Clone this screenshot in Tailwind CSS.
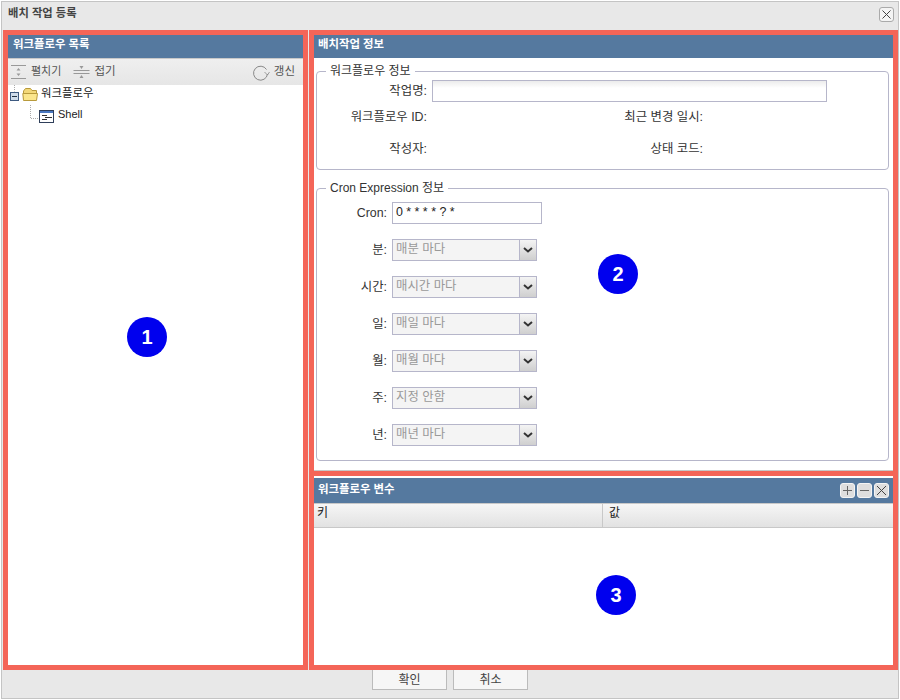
<!DOCTYPE html>
<html lang="ko">

<head>
    <meta charset="UTF-8" />
    <title>배치 작업 등록</title>
    <script src="https://cdn.jsdelivr.net/npm/@tailwindcss/browser@4"></script>
</head>

<body class="bg-white">
    <div class="relative w-[900px] h-[700px] overflow-hidden pl-px pt-px font-['Liberation_Sans','Noto_Sans_CJK_KR',sans-serif] text-[12px] leading-4 text-[#333]">
        <div class="flex flex-col w-[898px] h-[698px] border border-[#c4c4c4] bg-[#e8e8e8]">
            <!-- title bar -->
            <div class="flex items-center justify-between h-[28px] shrink-0 pl-[6px] pr-[4px]">
                <span class="font-bold text-[11.3px] text-[#444] -mt-[6px]">배치 작업 등록</span>
                <button class="flex items-center justify-center w-[15px] h-[15px] -mt-[3px] rounded-[3px] border border-[#aaa] bg-[#f4f4f4]">
                    <svg width="11" height="11" viewBox="0 0 11 11" fill="none" stroke="#444" stroke-width="1"><path d="M1.500 1.500l8 8M9.500 1.500l-8 8" /></svg>
                </button>
            </div>

            <div class="flex h-[640px] shrink-0 ml-px gap-px">
                <!-- workflow list -->
                <div class="flex flex-col w-[305px] border-[5px] border-[#f46558] bg-white">
                    <div class="h-[23px] shrink-0 pl-[5px] pt-[1px] bg-[#55799f] text-[11.4px] font-bold text-white">워크플로우 목록</div>
                    <div class="flex items-center h-[27px] shrink-0 pl-[3px] pr-[8px] border-t border-[#c8c8c8] bg-gradient-to-b from-[#efefef] to-[#e6e6e6] text-[#555]">
                        <svg width="16" height="16" viewBox="0 0 16 16" fill="none" stroke="#999"><path d="M0 1.500h15M0 14.500h15" /><path d="M7.500 4l-2 2.500h4zM7.500 12l-2-2.500h4z" fill="#999" stroke="none" /></svg>
                        <span class="ml-[4px] mr-[12px] text-[11px] -mt-[2px]">펼치기</span>
                        <svg width="18" height="16" viewBox="0 0 18 16" fill="none" stroke="#999"><path d="M0.500 6.500h16M0.500 9.500h16" /><path d="M8.500 5l-2-3h4zM8.500 11l-2 3h4z" fill="#999" stroke="none" /></svg>
                        <span class="ml-[3px] text-[11.500px] -mt-[2px]">접기</span>
                        <svg class="ml-auto" width="17" height="17" viewBox="0 0 17 17" fill="none" stroke="#888"><path d="M13.500 5.500A7 7 0 1 0 14.500 10" /><path d="M11.500 8l3 3 2-3" stroke-width="0.800" /></svg>
                        <span class="ml-[4px] text-[11.500px] -mt-[2px]">갱신</span>
                    </div>
                    <!-- tree -->
                    <div class="relative flex-1 text-[#222]">
                        <div class="flex items-center h-[18px] pl-[2px]">
                            <svg width="10" height="18" viewBox="0 0 10 18" fill="none"><path d="M4.500 0v6.500" stroke="#aaa" stroke-dasharray="1 1" /><rect x="0.500" y="7.500" width="8" height="8" fill="#cfdcea" stroke="#3d5a80" /><path d="M2 11.500h5" stroke="#234" /></svg>
                            <svg class="ml-[2px]" width="17" height="18" viewBox="0 0 17 18"><path d="M1.500 14V6l2-2.500h5l1.500 2h4.500V8" fill="#f3d878" stroke="#b89a3c" /><path d="M1.500 15.500 0.800 8.500h14.700l-1 7z" fill="#fbe68c" stroke="#b89a3c" /></svg>
                            <span class="ml-[2px] -mt-[2px] text-[11.400px]">워크플로우</span>
                        </div>
                        <div class="flex items-center h-[24px] pl-[22px]">
                            <svg width="25" height="20" viewBox="0 0 25 20" fill="none"><path d="M0.500 0v13.500H9" stroke="#aaa" stroke-dasharray="1 1" /><rect x="9.500" y="5.500" width="14" height="12" fill="#fff" stroke="#2f3f5a" /><path d="M10 6h13v2H10z" fill="#4a78c0" /><path d="M12 10.500h5M15 12.500h7M12 14.500h5" stroke="#333" /></svg>
                            <span class="ml-[3px] -mt-[3px] text-[11px]">Shell</span>
                        </div>
                    </div>
                </div>

                <!-- right column -->
                <div class="flex flex-col w-[589px] border-[5px] border-[#f46558] bg-white">
                    <div class="flex flex-col h-[436px] shrink-0 border-b border-[#c8c8c8]">
                        <div class="h-[23px] shrink-0 pl-[4px] pt-[1px] bg-[#55799f] text-[11.4px] font-bold text-white">배치작업 정보</div>
                        <div class="flex flex-col gap-[10px] pt-[5px] pl-[2px] w-[575px] text-[12.400px]">
                            <fieldset class="h-[107px] border border-[#b6b6ca] rounded-[4px] text-[#333]">
                                <legend class="ml-[9px] px-[4px] text-[12px]">워크플로우 정보</legend>
                                <div class="flex items-center h-[22px] mt-px">
                                    <span class="w-[110px] text-right">작업명:</span>
                                    <input class="w-[395px] h-[22px] ml-[5px] border border-[#b6b6ca] bg-gradient-to-b from-[#ececec] to-white to-[35%]" />
                                </div>
                                <div class="flex items-center h-[16px] mt-[7px]">
                                    <span class="w-[110px] text-right">워크플로우 ID:</span>
                                    <span class="w-[276px] text-right">최근 변경 일시:</span>
                                </div>
                                <div class="flex items-center h-[16px] mt-[16px]">
                                    <span class="w-[110px] text-right">작성자:</span>
                                    <span class="w-[276px] text-right">상태 코드:</span>
                                </div>
                            </fieldset>
                            <fieldset class="h-[281px] border border-[#b6b6ca] rounded-[4px]">
                                <legend class="ml-[9px] px-[4px] text-[12px]">Cron Expression 정보</legend>
                                <div class="flex flex-col gap-[15px] mt-[6px]">
                                    <div class="flex items-center h-[22px]">
                                        <span class="w-[70px] text-right">Cron:</span>
                                        <input value="0 * * * * ? *" class="w-[150px] h-[22px] ml-[5px] px-[3px] pb-[2px] border border-[#b6b6ca] bg-white text-[#222]" />
                                    </div>
                                    <div class="flex items-center h-[22px]">
                                        <span class="w-[70px] text-right">분:</span>
                                        <div class="flex w-[145px] h-[22px] ml-[5px] border border-[#b6b6ca] bg-[#f4f4f4] text-[#999]">
                                            <span class="flex-1 pl-[3px] mt-px">매분 마다</span>
                                            <span class="flex items-center justify-center w-[17px] border-l border-[#b6b6ca] bg-gradient-to-b from-[#f4f4f4] to-[#cfcfcf]"><svg width="10" height="6" viewBox="0 0 10 6"><path d="M1 1l4 3.500L9 1" fill="none" stroke="#333" stroke-width="2" /></svg></span>
                                        </div>
                                    </div>
                                    <div class="flex items-center h-[22px]">
                                        <span class="w-[70px] text-right">시간:</span>
                                        <div class="flex w-[145px] h-[22px] ml-[5px] border border-[#b6b6ca] bg-[#f4f4f4] text-[#999]">
                                            <span class="flex-1 pl-[3px] mt-px">매시간 마다</span>
                                            <span class="flex items-center justify-center w-[17px] border-l border-[#b6b6ca] bg-gradient-to-b from-[#f4f4f4] to-[#cfcfcf]"><svg width="10" height="6" viewBox="0 0 10 6"><path d="M1 1l4 3.500L9 1" fill="none" stroke="#333" stroke-width="2" /></svg></span>
                                        </div>
                                    </div>
                                    <div class="flex items-center h-[22px]">
                                        <span class="w-[70px] text-right">일:</span>
                                        <div class="flex w-[145px] h-[22px] ml-[5px] border border-[#b6b6ca] bg-[#f4f4f4] text-[#999]">
                                            <span class="flex-1 pl-[3px] mt-px">매일 마다</span>
                                            <span class="flex items-center justify-center w-[17px] border-l border-[#b6b6ca] bg-gradient-to-b from-[#f4f4f4] to-[#cfcfcf]"><svg width="10" height="6" viewBox="0 0 10 6"><path d="M1 1l4 3.500L9 1" fill="none" stroke="#333" stroke-width="2" /></svg></span>
                                        </div>
                                    </div>
                                    <div class="flex items-center h-[22px]">
                                        <span class="w-[70px] text-right">월:</span>
                                        <div class="flex w-[145px] h-[22px] ml-[5px] border border-[#b6b6ca] bg-[#f4f4f4] text-[#999]">
                                            <span class="flex-1 pl-[3px] mt-px">매월 마다</span>
                                            <span class="flex items-center justify-center w-[17px] border-l border-[#b6b6ca] bg-gradient-to-b from-[#f4f4f4] to-[#cfcfcf]"><svg width="10" height="6" viewBox="0 0 10 6"><path d="M1 1l4 3.500L9 1" fill="none" stroke="#333" stroke-width="2" /></svg></span>
                                        </div>
                                    </div>
                                    <div class="flex items-center h-[22px]">
                                        <span class="w-[70px] text-right">주:</span>
                                        <div class="flex w-[145px] h-[22px] ml-[5px] border border-[#b6b6ca] bg-[#f4f4f4] text-[#999]">
                                            <span class="flex-1 pl-[3px] mt-px">지정 안함</span>
                                            <span class="flex items-center justify-center w-[17px] border-l border-[#b6b6ca] bg-gradient-to-b from-[#f4f4f4] to-[#cfcfcf]"><svg width="10" height="6" viewBox="0 0 10 6"><path d="M1 1l4 3.500L9 1" fill="none" stroke="#333" stroke-width="2" /></svg></span>
                                        </div>
                                    </div>
                                    <div class="flex items-center h-[22px]">
                                        <span class="w-[70px] text-right">년:</span>
                                        <div class="flex w-[145px] h-[22px] ml-[5px] border border-[#b6b6ca] bg-[#f4f4f4] text-[#999]">
                                            <span class="flex-1 pl-[3px] mt-px">매년 마다</span>
                                            <span class="flex items-center justify-center w-[17px] border-l border-[#b6b6ca] bg-gradient-to-b from-[#f4f4f4] to-[#cfcfcf]"><svg width="10" height="6" viewBox="0 0 10 6"><path d="M1 1l4 3.500L9 1" fill="none" stroke="#333" stroke-width="2" /></svg></span>
                                        </div>
                                    </div>
                                </div>
                            </fieldset>
                        </div>
                    </div>

                    <div class="h-[5px] shrink-0 bg-[#f46558]"></div>

                    <!-- workflow variables -->
                    <div class="flex flex-col flex-1 pt-[2px]">
                        <div class="flex items-center justify-between h-[25px] shrink-0 pl-[4px] pr-[4px] bg-[#55799f] text-[11.4px] font-bold text-white">
                            <span class="-mt-[3px]">워크플로우 변수</span>
                            <div class="flex gap-[2px] -mt-[1px]">
                                <button class="flex items-center justify-center w-[15px] h-[15px] rounded-[3px] border border-[#f4f4f4] bg-[#dedede]"><svg width="9" height="9" viewBox="0 0 9 9" stroke="#666"><path d="M0 4.500h9M4.500 0v9" /></svg></button>
                                <button class="flex items-center justify-center w-[15px] h-[15px] rounded-[3px] border border-[#f4f4f4] bg-[#dedede]"><svg width="9" height="9" viewBox="0 0 9 9" stroke="#666"><path d="M0 4.500h9" /></svg></button>
                                <button class="flex items-center justify-center w-[15px] h-[15px] rounded-[3px] border border-[#f4f4f4] bg-[#dedede]"><svg width="11" height="11" viewBox="0 0 11 11" stroke="#444"><path d="M1 1l9 9M10 1l-9 9" /></svg></button>
                            </div>
                        </div>
                        <div class="flex h-[25px] shrink-0 border-y border-[#c8c8c8] bg-gradient-to-b from-[#f6f6f6] to-[#e2e2e2] text-[#222]">
                            <span class="w-[289px] pl-[3px] pt-[1px] border-r border-[#c8c8c8]">키</span>
                            <span class="pl-[6px] pt-[1px]">값</span>
                        </div>
                    </div>
                </div>
            </div>

            <!-- dialog buttons -->
            <div class="flex justify-center gap-[6px]">
                <button class="w-[75px] h-[20px] border border-t-0 border-[#bbb] bg-[#f6f6f6] text-[#444] text-[12px] leading-4">확인</button>
                <button class="w-[75px] h-[20px] border border-t-0 border-[#bbb] bg-[#f6f6f6] text-[#444] text-[12px] leading-4">취소</button>
            </div>
        </div>

        <!-- numbered callouts -->
        <div class="absolute left-[127px] top-[317px] flex items-center justify-center w-[40px] h-[40px] rounded-full bg-[#0000ee] text-white text-[20px] font-bold">1</div>
        <div class="absolute left-[598px] top-[254px] flex items-center justify-center w-[40px] h-[40px] rounded-full bg-[#0000ee] text-white text-[20px] font-bold">2</div>
        <div class="absolute left-[596px] top-[575px] flex items-center justify-center w-[40px] h-[40px] rounded-full bg-[#0000ee] text-white text-[20px] font-bold">3</div>
    </div>
</body>

</html>
